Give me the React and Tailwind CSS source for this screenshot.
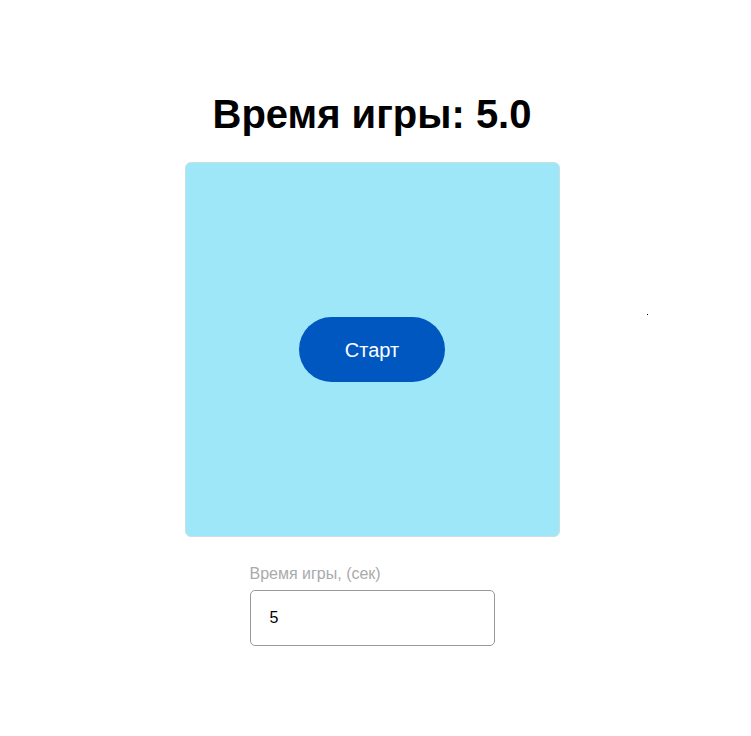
import React from "react";

export default function App() {
  return (
    <div className="relative w-[751px] h-[736px] bg-white" style={{ fontFamily: '"Liberation Sans", Arial, sans-serif' }}>
      <div className="w-[744px] flex flex-col items-center pt-[89px]">
        <h1 className="text-[40px] leading-[50px] font-bold text-black">Время игры: 5.0</h1>
        <div className="mt-[23px] w-[375px] h-[375px] rounded-[6px] border border-[#c9dfe6] bg-[#9de7f9] flex items-center justify-center">
          <button className="w-[146px] h-[65px] rounded-full bg-[#0057c0] text-white text-[20px]">Старт</button>
        </div>
        <div className="mt-[27px] w-[245px] flex flex-col">
          <label className="text-[16px] leading-[20px] text-[#aaaaaa]">Время игры, (сек)</label>
          <div className="mt-[6px] h-[56px] rounded-[5px] border border-[#999999] flex items-center pl-[19px] text-[16px] text-black">5</div>
        </div>
      </div>
      <div className="absolute left-[647px] top-[314px] w-[1px] h-[1px] bg-black" />
    </div>
  );
}
